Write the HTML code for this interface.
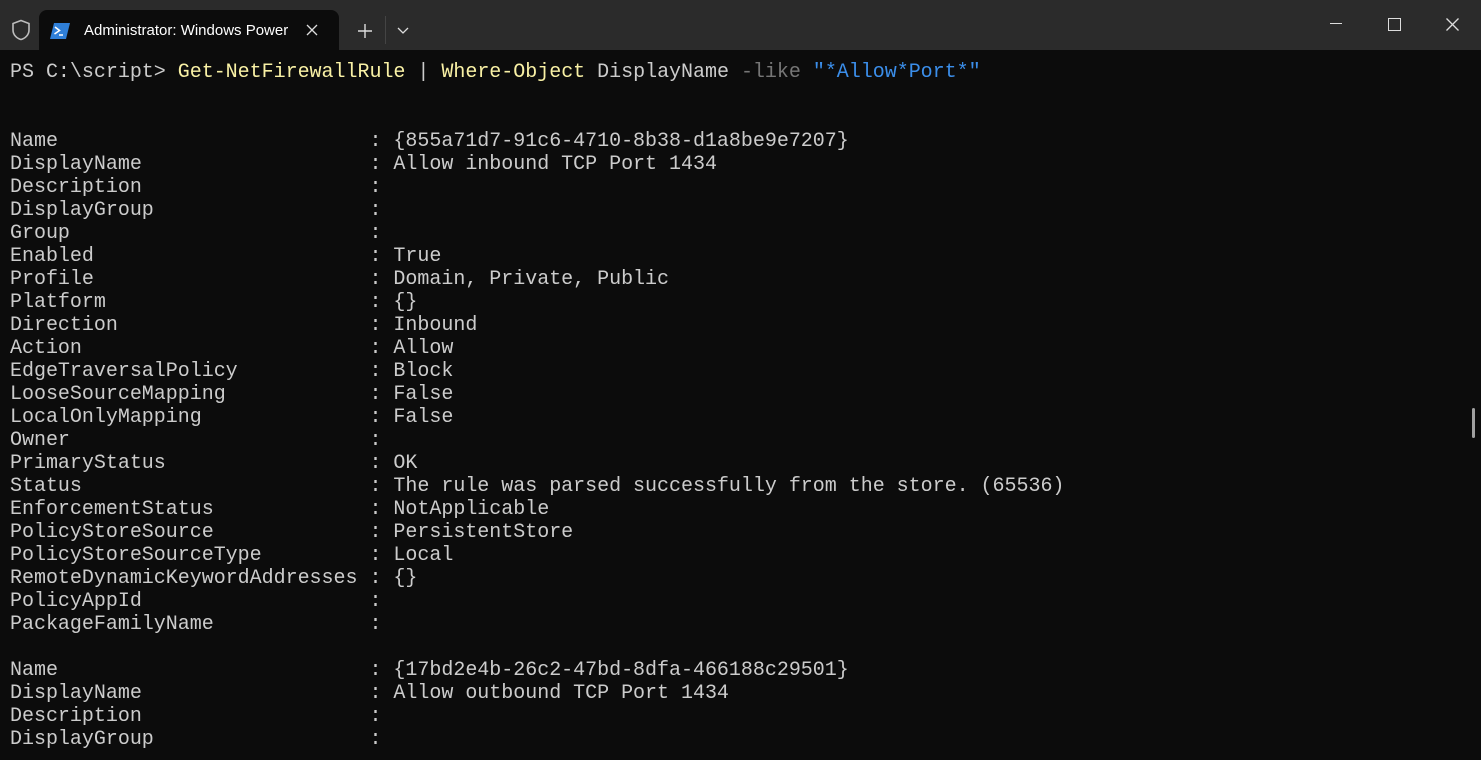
<!DOCTYPE html>
<html><head><meta charset="utf-8"><style>
html,body{margin:0;padding:0;width:1481px;height:760px;overflow:hidden;background:#0c0c0c}
.tb{position:absolute;left:0;top:0;width:1481px;height:50px;background:#2b2b2b}
.tab{position:absolute;left:39px;top:10px;width:300px;height:40px;background:#0c0c0c;border-radius:8px 8px 0 0}
.tabt{position:absolute;left:45px;top:12px;font:15px "Liberation Sans",sans-serif;color:#fff;white-space:nowrap;width:204px;overflow:hidden}
pre{position:absolute;left:10px;top:61px;margin:0;font:20px/23px "Liberation Mono",monospace;color:#cccccc;letter-spacing:-0.02px}
.y{color:#f9f1a5}.g{color:#767676}.b{color:#3b8eea}
</style></head><body>
<div class="tb">
<svg style="position:absolute;left:11px;top:19px" width="20" height="22" viewBox="0 0 20 22"><path d="M10 1.5 L18 4.5 V11 C18 16 14 19.5 10 20.5 C6 19.5 2 16 2 11 V4.5 Z" fill="none" stroke="#bdbdbd" stroke-width="1.6"/></svg>
<div class="tab">
<svg style="position:absolute;left:11px;top:13px" width="20" height="16" viewBox="0 0 20 16"><path d="M4 0 H20 L16 16 H0 Z" fill="#2f7fd8"/><path d="M5 4 L9.5 7.5 L4.5 11" fill="none" stroke="#fff" stroke-width="1.6"/><path d="M9 12 H13" stroke="#fff" stroke-width="1.5"/></svg>
<div class="tabt">Administrator: Windows PowerShell</div>
<svg style="position:absolute;left:267px;top:14px" width="12" height="12"><path d="M1 1 L11 11 M11 1 L1 11" stroke="#ddd" stroke-width="1.3"/></svg>
</div>
<svg style="position:absolute;left:358px;top:24px" width="14" height="14"><path d="M7 0 V14 M0 7 H14" stroke="#ddd" stroke-width="1.4"/></svg>
<div style="position:absolute;left:385px;top:16px;width:1px;height:28px;background:#444"></div>
<svg style="position:absolute;left:397px;top:27px" width="12" height="8"><path d="M1 1 L6 6 L11 1" fill="none" stroke="#ddd" stroke-width="1.3"/></svg>
<div style="position:absolute;left:1330px;top:23px;width:12px;height:1px;background:#ddd"></div>
<div style="position:absolute;left:1388px;top:18px;width:11px;height:11px;border:1px solid #ddd"></div>
<svg style="position:absolute;left:1446px;top:18px" width="13" height="13"><path d="M0.5 0.5 L12.5 12.5 M12.5 0.5 L0.5 12.5" stroke="#ddd" stroke-width="1.3"/></svg>
</div>
<div style="position:absolute;left:1472px;top:408px;width:3px;height:30px;background:#a0a0a0;border-radius:2px"></div>
<pre>PS C:\script&gt; <span class="y">Get-NetFirewallRule</span> | <span class="y">Where-Object</span> DisplayName <span class="g">-like</span> <span class="b">"*Allow*Port*"</span>


Name                          : {855a71d7-91c6-4710-8b38-d1a8be9e7207}
DisplayName                   : Allow inbound TCP Port 1434
Description                   :
DisplayGroup                  :
Group                         :
Enabled                       : True
Profile                       : Domain, Private, Public
Platform                      : {}
Direction                     : Inbound
Action                        : Allow
EdgeTraversalPolicy           : Block
LooseSourceMapping            : False
LocalOnlyMapping              : False
Owner                         :
PrimaryStatus                 : OK
Status                        : The rule was parsed successfully from the store. (65536)
EnforcementStatus             : NotApplicable
PolicyStoreSource             : PersistentStore
PolicyStoreSourceType         : Local
RemoteDynamicKeywordAddresses : {}
PolicyAppId                   :
PackageFamilyName             :

Name                          : {17bd2e4b-26c2-47bd-8dfa-466188c29501}
DisplayName                   : Allow outbound TCP Port 1434
Description                   :
DisplayGroup                  :
</pre>
</body></html>
